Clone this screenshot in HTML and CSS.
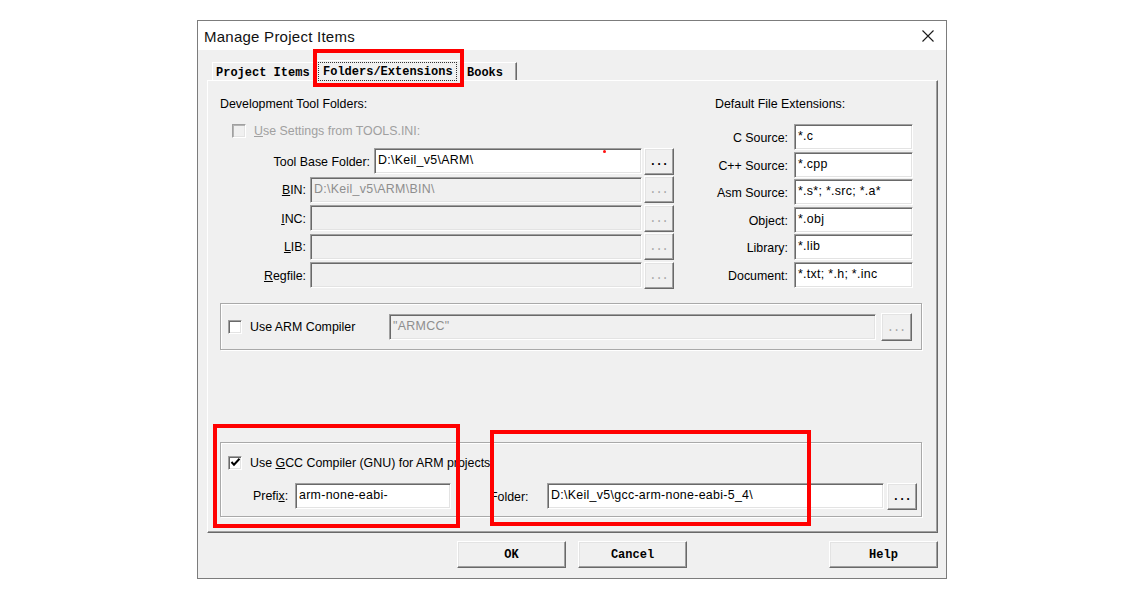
FILE: index.html
```html
<!DOCTYPE html>
<html>
<head>
<meta charset="utf-8">
<link rel="stylesheet" href="styles.css">
</head>
<body>
<div class="desk">
  <div class="dialog">
    <div class="titlebar">
      <span class="title">Manage Project Items</span>
      <svg class="close" width="12" height="12" viewBox="0 0 12 12"><path d="M0.5 0.5 L11.5 11.5 M11.5 0.5 L0.5 11.5" stroke="#1a1a1a" stroke-width="1.1" fill="none"/></svg>
    </div>
    <div class="body">
      <div class="tabs">
        <div class="tab tab-items">Project Items</div>
        <div class="tab tab-active"><span class="focus">Folders/Extensions</span></div>
        <div class="tab tab-books">Books</div>
      </div>
      <div class="panel">
        <div class="top">
          <div class="col-left">
            <div class="heading">Development Tool Folders:</div>
            <div class="check-row disabled">
              <span class="cb cb-disabled"></span>
              <span><u>U</u>se Settings from TOOLS.INI:</span>
            </div>
            <div class="rows">
              <div class="row">
                <span class="lbl">Tool Base Folder:</span>
                <span class="field w-base">D:\Keil_v5\ARM\</span>
                <span class="btn dots">...</span>
              </div>
              <div class="row">
                <span class="lbl"><u>B</u>IN:</span>
                <span class="field field-dis w-path">D:\Keil_v5\ARM\BIN\</span>
                <span class="btn dots dots-dis">...</span>
              </div>
              <div class="row">
                <span class="lbl"><u>I</u>NC:</span>
                <span class="field field-dis w-path"></span>
                <span class="btn dots dots-dis">...</span>
              </div>
              <div class="row">
                <span class="lbl"><u>L</u>IB:</span>
                <span class="field field-dis w-path"></span>
                <span class="btn dots dots-dis">...</span>
              </div>
              <div class="row">
                <span class="lbl"><u>R</u>egfile:</span>
                <span class="field field-dis w-path"></span>
                <span class="btn dots dots-dis">...</span>
              </div>
            </div>
          </div>
          <div class="col-right">
            <div class="heading">Default File Extensions:</div>
            <div class="ext-rows">
              <div class="ext-row"><span class="lbl">C Source:</span><span class="field">*.c</span></div>
              <div class="ext-row"><span class="lbl">C++ Source:</span><span class="field">*.cpp</span></div>
              <div class="ext-row"><span class="lbl">Asm Source:</span><span class="field">*.s*; *.src; *.a*</span></div>
              <div class="ext-row"><span class="lbl">Object:</span><span class="field">*.obj</span></div>
              <div class="ext-row"><span class="lbl">Library:</span><span class="field">*.lib</span></div>
              <div class="ext-row"><span class="lbl">Document:</span><span class="field">*.txt; *.h; *.inc</span></div>
            </div>
          </div>
        </div>

        <div class="group group-arm">
          <div class="arm-check">
            <span class="cb"></span>
            <span>Use ARM Compiler</span>
          </div>
          <span class="field field-dis w-arm">"ARMCC"</span>
          <span class="btn dots dots-dis arm-btn">...</span>
        </div>

        <div class="group group-gcc">
          <div class="gcc-check">
            <span class="cb cb-checked"><svg width="11" height="11" viewBox="0 0 11 11"><path d="M1.5 5 L4 7.8 L9.5 1.8" stroke="#000" stroke-width="2" fill="none"/></svg></span>
            <span>Use <u>G</u>CC Compiler (GNU) for ARM projects</span>
          </div>
          <div class="gcc-row">
            <span class="prefix-lbl">Prefi<u>x</u>:</span>
            <span class="field w-prefix">arm-none-eabi-</span>
            <span class="folder-lbl">Folder:</span>
            <span class="field w-folder">D:\Keil_v5\gcc-arm-none-eabi-5_4\</span>
            <span class="btn dots gcc-btn">...</span>
          </div>
        </div>
      </div>
      <div class="buttons">
        <span class="btn pbtn">OK</span>
        <span class="btn pbtn cancel">Cancel</span>
        <span class="btn pbtn help">Help</span>
      </div>
    </div>
  </div>
</div>
<div class="redbox rb-tab"></div>
<div class="redbox rb-gcc"></div>
<div class="redbox rb-folder"></div>
<div class="reddot"></div>
</body>
</html>
```

FILE: styles.css
```css
* { box-sizing: border-box; }
html, body { margin: 0; padding: 0; background: #fff; }
body {
  width: 1129px;
  height: 592px;
  overflow: hidden;
  position: relative;
  font-family: "Liberation Sans", Arial, sans-serif;
  font-size: 12.4px;
  color: #000;
}
u { text-decoration: underline; text-underline-offset: 1px; }

.desk { padding: 20px 0 0 197px; }

.dialog {
  width: 750px;
  height: 559px;
  border: 1px solid #7c7c7c;
  background: #f0f0f0;
  display: flex;
  flex-direction: column;
}

.titlebar {
  height: 29px;
  background: #fff;
  display: flex;
  align-items: center;
  justify-content: space-between;
  padding: 0 12px 0 6px;
}
.title {
  font-size: 15px;
  letter-spacing: 0.25px;
  color: #111;
  padding-top: 1px;
}
.close { display: block; margin-top: 1px; }

.body {
  flex: 1;
  display: flex;
  flex-direction: column;
  padding: 11px 8px 10px 9px;
}

/* tabs */
.tabs {
  height: 19px;
  display: flex;
  align-items: flex-end;
  padding-left: 5px;
}
.tab {
  height: 18px;
  font-family: "Liberation Mono", "Courier New", monospace;
  font-weight: bold;
  font-size: 12px;
  line-height: 17px;
  padding-top: 2px;
  border-top: 1px solid #fff;
  border-left: 1px solid #fff;
  border-right: 1px solid #696969;
  box-shadow: inset -1px 0 0 #a0a0a0;
  color: #000;
  white-space: nowrap;
}
.tab-items { width: 104px; padding-left: 3px; }
.tab-books { width: 55px; padding-left: 4px; }
.tab-active {
  position: relative;
  z-index: 1;
  height: 21px;
  width: 146px;
  margin-bottom: -1px;
  background: #f0f0f0;
  padding: 2px 0 0 2px;
}
.focus {
  display: inline-block;
  outline: 1px dotted #333;
  outline-offset: 0;
  padding: 1px 3px 0 4px;
  line-height: 16px;
}

/* panel */
.panel {
  flex: 1;
  display: flex;
  flex-direction: column;
  border: 1px solid;
  border-color: #fff #696969 #696969 #fff;
  box-shadow: inset -1px -1px 0 #a0a0a0;
  padding: 16px 15px 15px 12px;
}

.top { display: flex; }
.col-left { width: 454px; display: flex; flex-direction: column; }
.col-right { width: 198px; margin-left: 41px; display: flex; flex-direction: column; }

.heading { line-height: 15px; height: 15px; }

.check-row {
  margin-top: 11px;
  height: 15px;
  display: flex;
  align-items: center;
  padding-left: 12px;
  gap: 8px;
}
.disabled { color: #a0a0a0; }

.cb {
  width: 14px;
  height: 14px;
  flex: none;
  border: 1px solid;
  border-color: #a0a0a0 #fff #fff #a0a0a0;
  box-shadow: inset 1px 1px 0 #696969, inset -1px -1px 0 #e3e3e3;
  background: #fff;
  display: flex;
  align-items: center;
  justify-content: center;
}
.cb-disabled { background: #f0f0f0; box-shadow: inset 1px 1px 0 #b4b4b4, inset -1px -1px 0 #e3e3e3; }

.rows {
  margin-top: 10px;
  display: flex;
  flex-direction: column;
  gap: 2.5px;
}
.row {
  display: flex;
  justify-content: flex-end;
  align-items: center;
  height: 26px;
}
.row .lbl { margin-right: 4px; padding-top: 1px; }

.field {
  display: block;
  height: 26px;
  border: 1px solid;
  border-color: #a0a0a0 #fff #fff #a0a0a0;
  box-shadow: inset 1px 1px 0 #696969, inset -1px -1px 0 #e3e3e3;
  background: #fff;
  line-height: 23px;
  padding: 0 3px;
  white-space: nowrap;
  overflow: hidden;
  letter-spacing: 0.3px;
  color: #000;
}
.field-dis { background: #f0f0f0; color: #8e8e8e; }
.w-base { width: 268px; }
.w-path { width: 332px; }

.btn {
  display: flex;
  align-items: center;
  justify-content: center;
  border: 1px solid;
  border-color: #fff #696969 #696969 #fff;
  box-shadow: inset -1px -1px 0 #a0a0a0, inset 1px 1px 0 #e3e3e3;
  background: #f0f0f0;
  font-family: "Liberation Mono", "Courier New", monospace;
  font-weight: bold;
  font-size: 12px;
  color: #000;
  flex: none;
}
.dots {
  width: 30px;
  height: 27px;
  margin-left: 2px;
  align-items: flex-end;
  padding-bottom: 5px;
  letter-spacing: -1px;
  padding-right: 1px;
}
.dots-dis { color: #a8a8a8; font-weight: normal; }

/* right column */
.ext-rows {
  margin-top: 12px;
  display: flex;
  flex-direction: column;
  gap: 1.6px;
}
.ext-row {
  display: flex;
  justify-content: flex-end;
  align-items: center;
  height: 26px;
}
.ext-row .lbl { margin-right: 6px; padding-top: 2px; }
.ext-row .field { width: 119px; }

/* groups */
.group {
  border: 1px solid #a9a9a9;
  box-shadow: inset 1px 1px 0 #fff, 1px 1px 0 #fff;
}
.group-arm {
  margin-top: 15px;
  height: 47px;
  display: flex;
  align-items: center;
  padding: 0 8px 0 7px;
}
.arm-check {
  width: 161px;
  display: flex;
  align-items: center;
  gap: 8px;
}
.w-arm { width: 487px; }
.arm-btn { width: 31px; height: 28px; margin-left: 5px; }

.group-gcc {
  margin-top: auto;
  height: 75px;
  padding: 12px 0 0 7px;
}
.gcc-check {
  height: 15px;
  display: flex;
  align-items: center;
  gap: 8px;
}
.cb-checked svg { display: block; }
.gcc-row {
  margin-top: 12px;
  display: flex;
  align-items: center;
  padding-left: 25px;
}
.prefix-lbl { width: 42px; }
.w-prefix { width: 156px; }
.folder-lbl { width: 96px; padding-left: 39px; padding-top: 2px; }
.w-folder { width: 337px; }
.gcc-btn { width: 30px; height: 27px; margin-left: 3px; margin-top: 1px; }

/* bottom buttons */
.buttons {
  margin-top: 8px;
  height: 27px;
  display: flex;
  padding-left: 250px;
}
.pbtn { width: 109px; height: 27px; padding-top: 1px; }
.cancel { margin-left: 12px; }
.help { margin-left: auto; }

/* annotations */
.redbox {
  position: absolute;
  border: 4px solid #ff0000;
  z-index: 5;
}
.rb-tab { left: 313px; top: 49px; width: 151px; height: 38px; }
.rb-gcc { left: 213px; top: 424px; width: 247px; height: 104px; }
.rb-folder { left: 490px; top: 430px; width: 321px; height: 96px; }
.reddot {
  position: absolute;
  left: 603px;
  top: 150px;
  width: 3px;
  height: 3px;
  border-radius: 50%;
  background: #ff1010;
  z-index: 5;
}
```
